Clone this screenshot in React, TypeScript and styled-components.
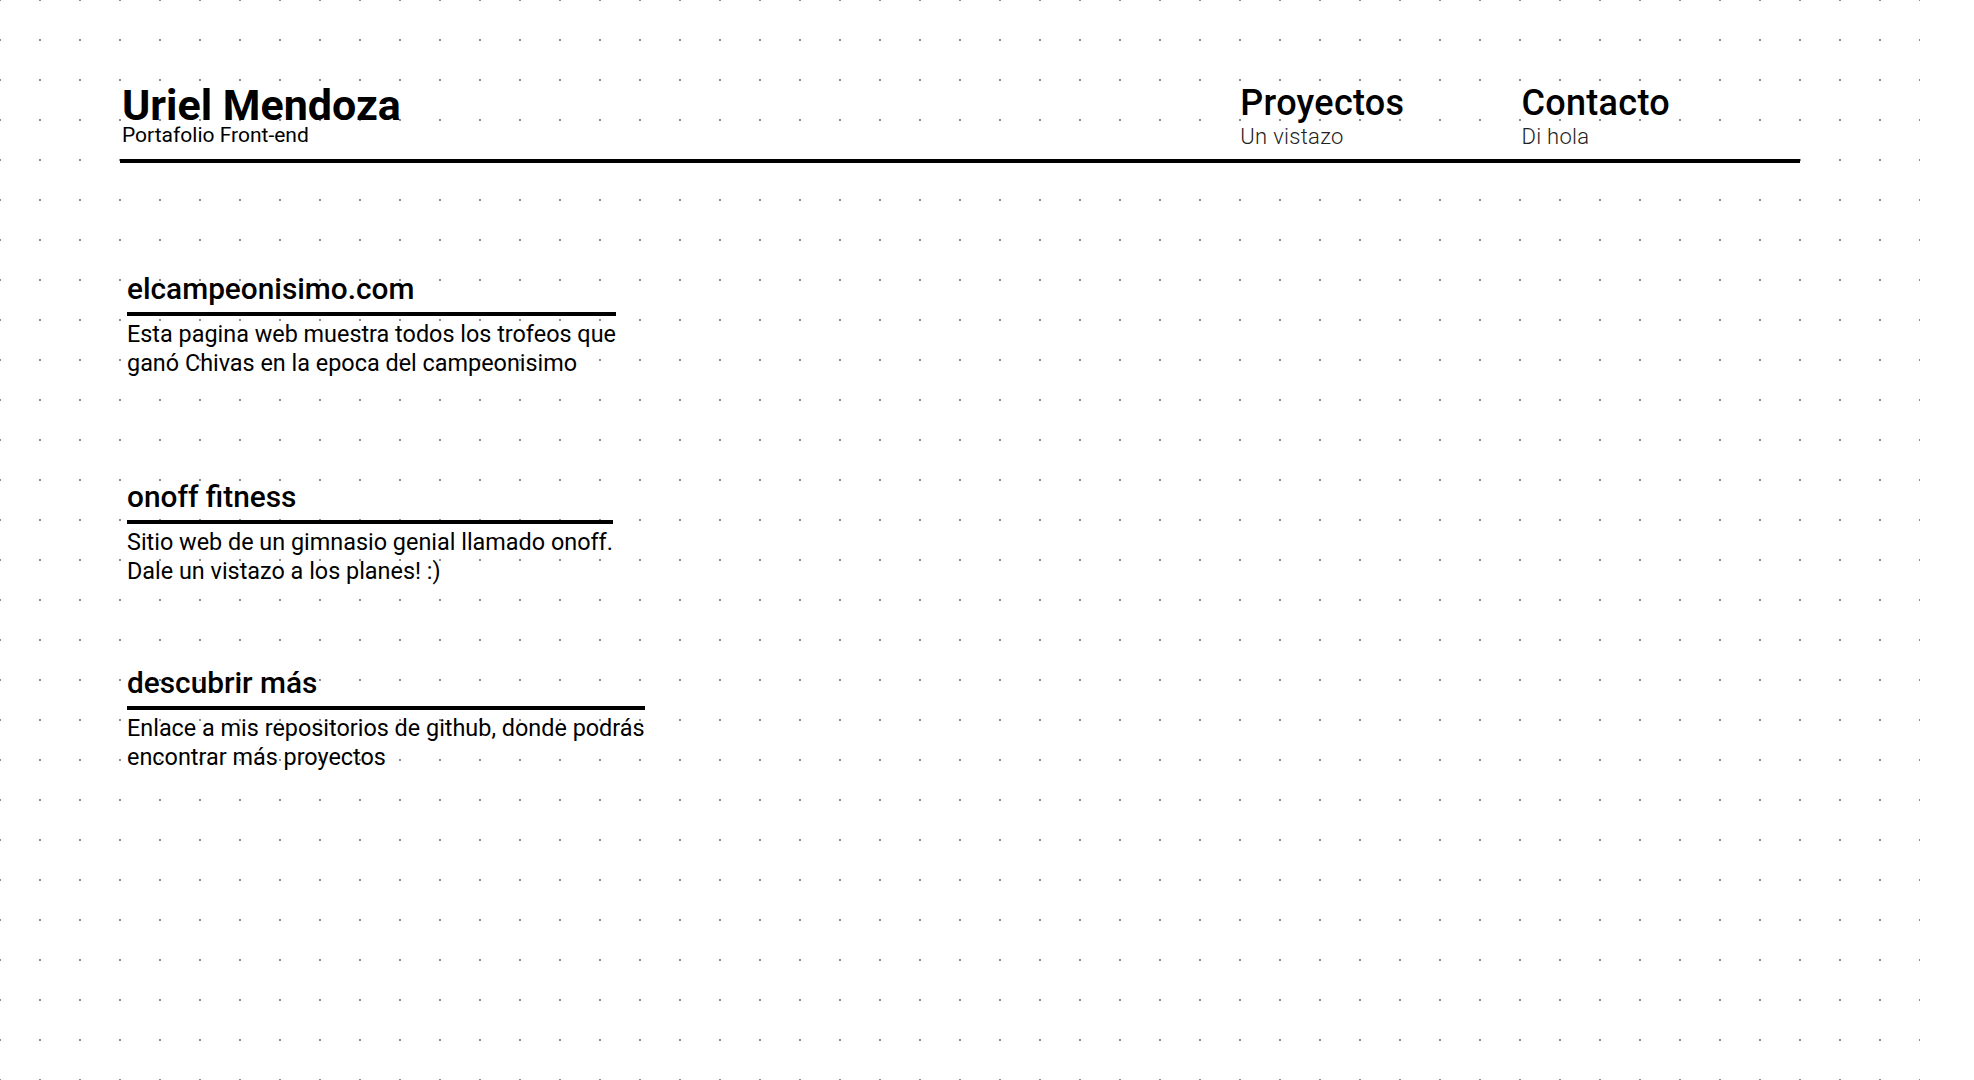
import { createGlobalStyle, styled } from "styled-components";

const GlobalStyle = createGlobalStyle`
  html, body {
    margin: 0;
    padding: 0;
    background: #ffffff;
  }
  body {
    font-family: Roboto, "Liberation Sans", Arial, sans-serif;
    color: #000000;
  }
`;

const StyledPage = styled.div`
  width: 1920px;
  min-height: 100vh;
  padding-top: 85px;
  box-sizing: border-box;
  background-color: #ffffff;
  background-image: conic-gradient(
    from 270deg at 2px 2px,
    #8c8c8c 25%,
    transparent 0
  );
  background-size: 40px 40px;
  background-position: -1px -1px;
`;

const StyledHeader = styled.header`
  display: flex;
  justify-content: space-between;
  align-items: flex-end;
  margin: 0 120px;
  padding: 0 0 13px 2px;
  border-bottom: 4px solid #000000;
`;

const StyledBrand = styled.div`
  display: flex;
  flex-direction: column;
`;

const StyledName = styled.h1`
  margin: 0;
  font-size: 43px;
  line-height: 40px;
  font-weight: 700;
`;

const StyledTagline = styled.p`
  margin: 0;
  font-size: 21px;
  line-height: 21px;
  font-weight: 400;
`;

const StyledNav = styled.nav`
  display: flex;
  gap: 117px;
  padding-right: 130px;
`;

const StyledNavItem = styled.a`
  display: flex;
  flex-direction: column;
  gap: 7px;
  color: inherit;
  text-decoration: none;
  cursor: pointer;
`;

const StyledNavTitle = styled.span`
  font-size: 36px;
  line-height: 36px;
  font-weight: 500;
  letter-spacing: 0.3px;
`;

const StyledNavHint = styled.span`
  font-size: 22px;
  line-height: 18px;
  font-weight: 300;
  letter-spacing: 0.3px;
  color: #222222;
`;

const StyledProjects = styled.main`
  display: flex;
  flex-direction: column;
  align-items: flex-start;
  padding-left: 127px;
`;

const StyledCard = styled.a<{ $offset: number }>`
  display: flex;
  flex-direction: column;
  margin-top: ${(props) => props.$offset}px;
  color: inherit;
  text-decoration: none;
  cursor: pointer;
`;

const StyledCardTitle = styled.h2`
  margin: 0;
  padding-bottom: 8px;
  border-bottom: 4px solid #000000;
  font-size: 29.8px;
  line-height: 30px;
  font-weight: 500;
`;

const StyledCardText = styled.p`
  margin: 4px 0 0;
  font-size: 23.4px;
  line-height: 28.5px;
  font-weight: 400;
  white-space: nowrap;
`;

const projects = [
  {
    title: "elcampeonisimo.com",
    lines: [
      "Esta pagina web muestra todos los trofeos que",
      "ganó Chivas en la epoca del campeonisimo",
    ],
    offset: 111,
  },
  {
    title: "onoff fitness",
    lines: [
      "Sitio web de un gimnasio genial llamado onoff.",
      "Dale un vistazo a los planes! :)",
    ],
    offset: 105,
  },
  {
    title: "descubrir más",
    lines: [
      "Enlace a mis repositorios de github, donde podrás",
      "encontrar más proyectos",
    ],
    offset: 83,
  },
];

function App() {
  return (
    <>
      <GlobalStyle />
      <StyledPage>
        <StyledHeader>
          <StyledBrand>
            <StyledName>Uriel Mendoza</StyledName>
            <StyledTagline>Portafolio Front-end</StyledTagline>
          </StyledBrand>
          <StyledNav>
            <StyledNavItem>
              <StyledNavTitle>Proyectos</StyledNavTitle>
              <StyledNavHint>Un vistazo</StyledNavHint>
            </StyledNavItem>
            <StyledNavItem>
              <StyledNavTitle>Contacto</StyledNavTitle>
              <StyledNavHint>Di hola</StyledNavHint>
            </StyledNavItem>
          </StyledNav>
        </StyledHeader>

        <StyledProjects>
          {projects.map((project) => (
            <StyledCard key={project.title} $offset={project.offset}>
              <StyledCardTitle>{project.title}</StyledCardTitle>
              <StyledCardText>
                {project.lines[0]}
                <br />
                {project.lines[1]}
              </StyledCardText>
            </StyledCard>
          ))}
        </StyledProjects>
      </StyledPage>
    </>
  );
}

export default App;
